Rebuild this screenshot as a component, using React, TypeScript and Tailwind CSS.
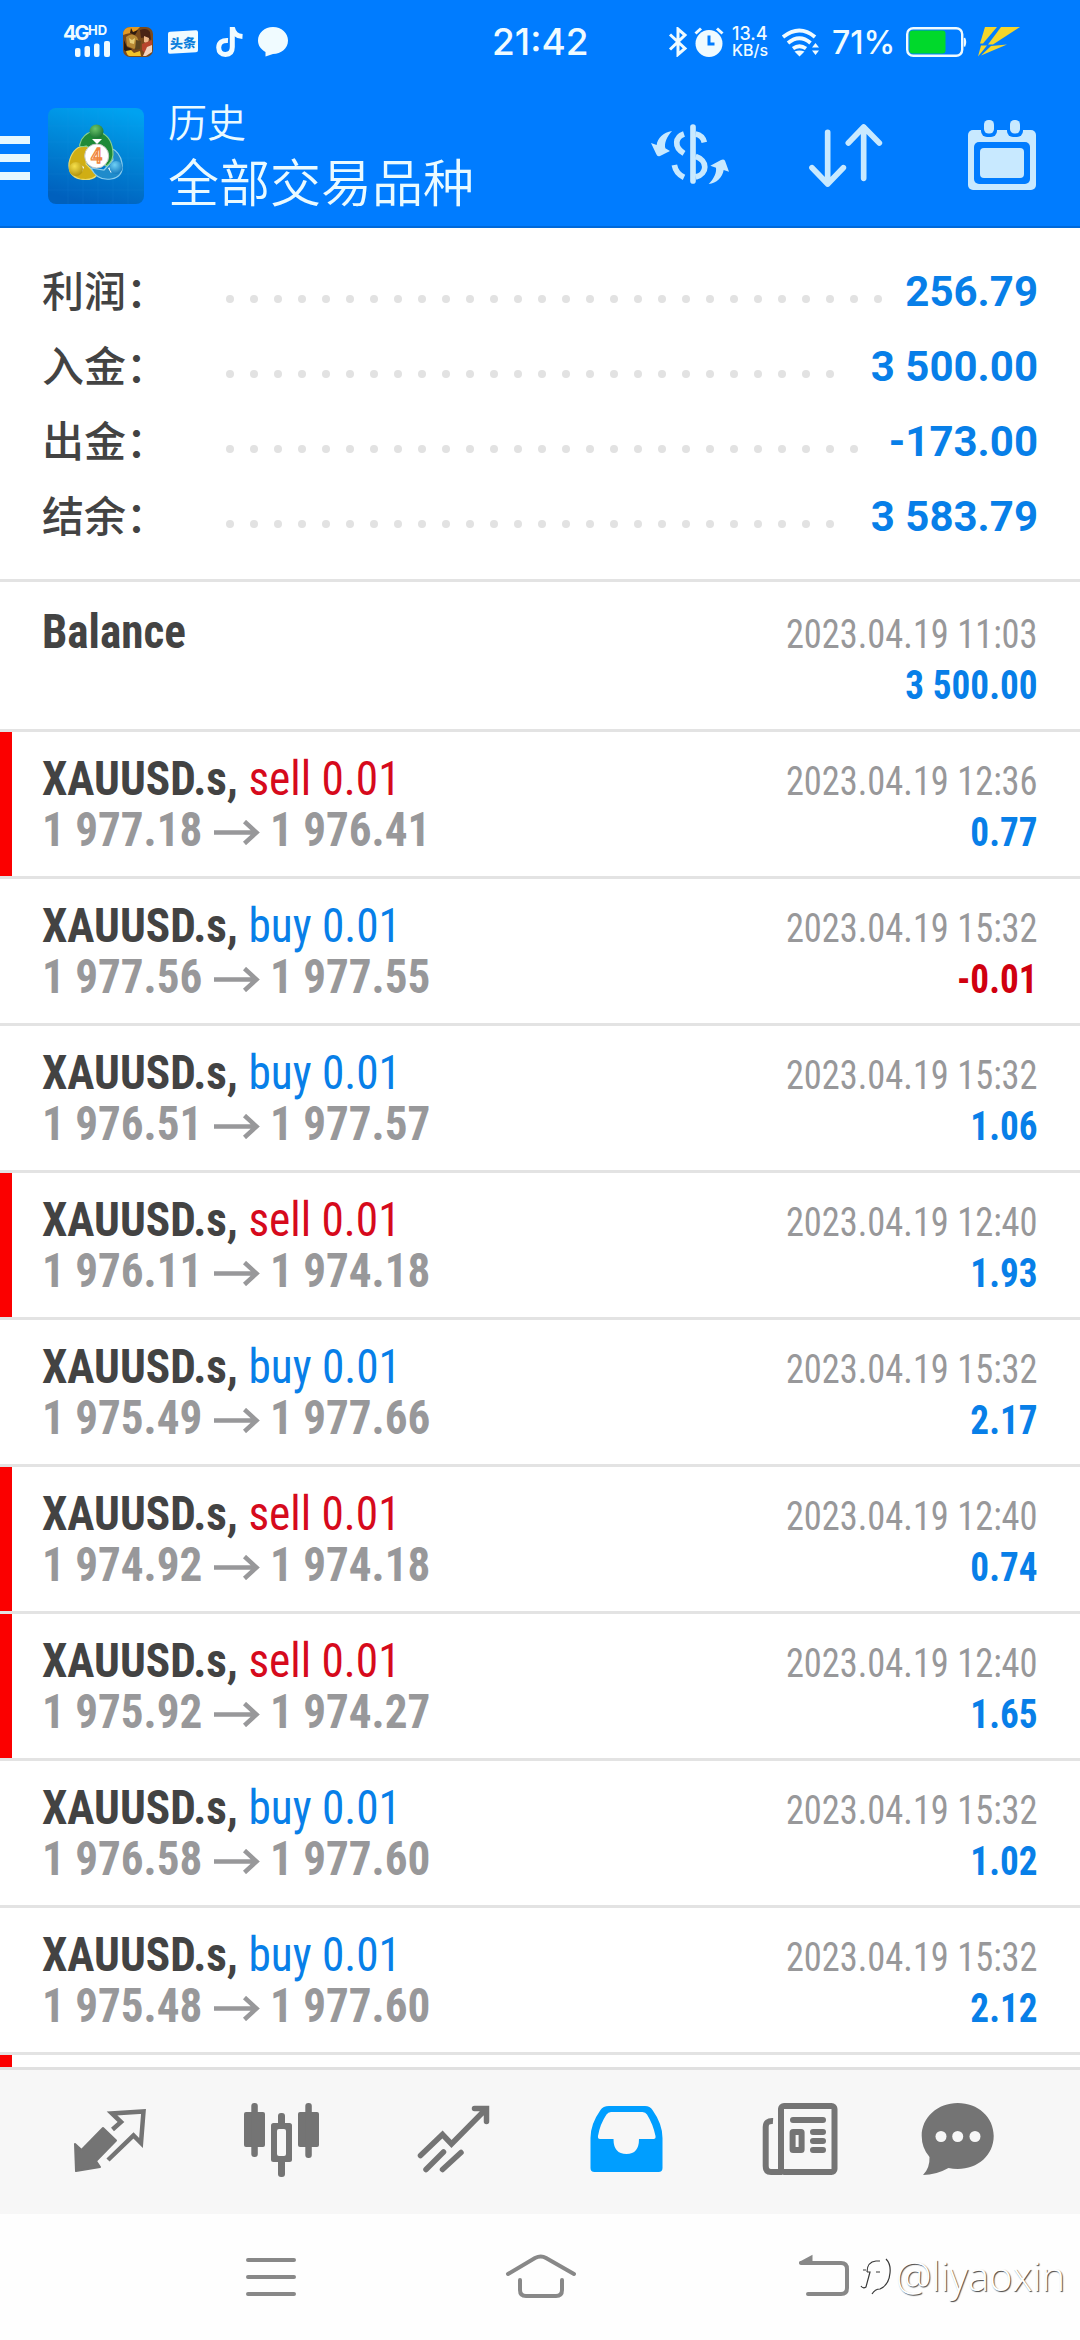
const summary = [
  { label: '利润：', value: '256.79', dots: 28 },
  { label: '入金：', value: '3 500.00', dots: 26 },
  { label: '出金：', value: '-173.00', dots: 27 },
  { label: '结余：', value: '3 583.79', dots: 26 },
];

const deals = [
  { id: 1, side: 'sell', open: '1 977.18', close: '1 976.41', time: '2023.04.19 12:36', profit: '0.77' },
  { id: 2, side: 'buy', open: '1 977.56', close: '1 977.55', time: '2023.04.19 15:32', profit: '-0.01' },
  { id: 3, side: 'buy', open: '1 976.51', close: '1 977.57', time: '2023.04.19 15:32', profit: '1.06' },
  { id: 4, side: 'sell', open: '1 976.11', close: '1 974.18', time: '2023.04.19 12:40', profit: '1.93' },
  { id: 5, side: 'buy', open: '1 975.49', close: '1 977.66', time: '2023.04.19 15:32', profit: '2.17' },
  { id: 6, side: 'sell', open: '1 974.92', close: '1 974.18', time: '2023.04.19 12:40', profit: '0.74' },
  { id: 7, side: 'sell', open: '1 975.92', close: '1 974.27', time: '2023.04.19 12:40', profit: '1.65' },
  { id: 8, side: 'buy', open: '1 976.58', close: '1 977.60', time: '2023.04.19 15:32', profit: '1.02' },
  { id: 9, side: 'buy', open: '1 975.48', close: '1 977.60', time: '2023.04.19 15:32', profit: '2.12' },
];

function StatusBar() {
  return (
    <div className="flex h-[84px] items-start pt-[25px] pl-[63px] font-['Inter',sans-serif] text-[#f0fbff]">
      {/* Signal */}
      <div className="h-8 w-[47px]">
        <div className="flex h-4 items-start font-bold">
          <span className="w-[25px] text-[20px] leading-4 tracking-[-2px]">4G</span>
          <span className="text-[13px] leading-[11px]">HD</span>
        </div>
        <svg className="ml-3 block" width="35" height="16" viewBox="0 0 35 16" fill="currentColor">
          <rect x="0" y="7" width="5.5" height="9" rx="2" />
          <rect x="9.5" y="5" width="5.5" height="11" rx="2" />
          <rect x="19" y="2.500" width="5.500" height="13.500" rx="2" />
          <rect x="29" y="0" width="6" height="16" rx="2" />
        </svg>
      </div>

      {/* Notifications */}
      <svg className="mt-0.5 ml-[13px]" width="30" height="30" viewBox="0 0 30 30">
        <rect width="30" height="30" rx="7" fill="#7a4a1c" />
        <path d="M0 8Q0 0 8 0H17L12 5L3 7Z" fill="#e39a24" />
        <path d="M8 1L10 5L15 3L12 8L7 6Z" fill="#2e1a10" />
        <path d="M17 3Q24 0 27 5L28 13L23 10L18 11Z" fill="#4b2415" />
        <path d="M21 9L26 11L25 17L21 15Z" fill="#f0b98c" />
        <path d="M19 17L29 13V24L24 28L19 23Z" fill="#b8452c" />
        <path d="M24 20L29 18V25L23 29H20Z" fill="#f3d3bd" />
        <path d="M3 10Q9 5 14 10L17 17L11 22L4 19Z" fill="#b98a35" />
        <path d="M6 11L9 13L12 11L11 17L7 16Z" fill="#e9cf7a" />
        <path d="M1 13L4 20L9 22L6 26L1 23Z" fill="#2b1d12" />
        <path d="M3 24L8 23L11 26L17 24L18 29H7Q4 29 3 24Z" fill="#f2c329" />
        <path d="M13 13L18 14L17 22L12 23Z" fill="#5c4521" />
      </svg>
      <div className="mt-[6px] ml-[15px] flex h-[22px] w-[30px] -skew-y-3 items-center justify-center rounded-[2px] bg-[#f0fbff] font-['Noto_Sans_CJK_SC',sans-serif] text-[13px] leading-none font-black text-[#0a7fdc]">
        头条
      </div>
      <svg className="mt-0.5 ml-[18px]" width="27" height="30" viewBox="0 0 27 30" fill="none" stroke="currentColor" strokeWidth="5">
        <path d="M12 13.500Q3 13 2.700 20.500Q3 27.400 9.500 27.400Q16.300 27.400 16.300 20V0" />
        <path d="M16.500 1Q18 9 26.500 9.500" />
      </svg>
      <svg className="mt-0.5 ml-[15px]" width="30" height="30" viewBox="0 0 30 30" fill="currentColor">
        <path d="M15 0C23.500 0 30 6 30 13.500C30 21.500 23 27 15 27L7.500 29.500V25C3 22.500 0 18.500 0 13.500C0 6 6.500 0 15 0Z" />
      </svg>

      <div className="mt-[-1px] ml-[204px] w-[96px] text-[37px] leading-[36px] font-medium">21:42</div>

      <svg className="mt-[2px] ml-[80px]" width="20" height="30" viewBox="0 0 20 30" fill="none" stroke="currentColor" strokeWidth="3">
        <path d="M2 7.500L17 21.500L10 27.500V2L17 8L2 22.500" />
      </svg>
      <svg className="mt-[2px] ml-[6px]" width="30" height="30" viewBox="0 0 30 30">
        <circle cx="15" cy="16.500" r="13.500" fill="currentColor" />
        <path d="M1.500 6.500L7 1.500M23 1.500L28.500 6.500" stroke="currentColor" strokeWidth="3" />
        <path d="M15 8.500V17H20.500" stroke="#007cff" strokeWidth="3" fill="none" />
      </svg>
      <div className="mt-[1px] ml-[8px] w-[40px] leading-[16px] font-medium">
        <div className="text-[18px]">13.4</div>
        <div className="text-[16px]">KB/s</div>
      </div>
      <svg className="mt-[2px] ml-[9px]" width="40" height="30" viewBox="0 0 40 30">
        <path d="M2 10Q18.500 -3 34 10M7 16Q18.500 6.500 29.500 16M12 21.500Q18.500 17 25 21.500" fill="none" stroke="currentColor" strokeWidth="3.800" />
        <path d="M13.500 24.500Q18.500 22.500 23.500 24.500L18.500 29.500Z" fill="currentColor" />
        <path d="M31 20.500L34.500 16L38 20.500ZM31 23.500L34.500 28L38 23.500Z" fill="currentColor" />
      </svg>
      <div className="mt-[2px] ml-[11px] w-[63px] text-[32px] leading-[32px] font-medium">71%</div>
      <svg className="mt-[2px] ml-[11px]" width="61" height="30" viewBox="0 0 61 30">
        <rect x="1.200" y="1.200" width="55" height="27.600" rx="6" fill="none" stroke="currentColor" strokeWidth="2.400" />
        <rect x="3.500" y="3.500" width="36" height="23" rx="3" fill="#00d92b" />
        <path d="M58.500 11Q60.500 15 58.500 19.500Z" stroke="currentColor" strokeWidth="1.500" />
      </svg>
      <svg className="mt-[2px] ml-[11px]" width="42" height="30" viewBox="0 0 42 30" fill="#f5d52a">
        <path d="M7 0H19L5 16.500H2Z" />
        <path d="M23 0H42L15 17.500H10Z" />
        <path d="M3 18.500H9L0 29.500ZM13 19L29 17.500L3 28.500Z" />
      </svg>
    </div>
  );
}

function AppLogo() {
  return (
    <svg className="ml-[18px]" width="96" height="96" viewBox="0 0 96 96">
      <defs>
        <linearGradient id="tile" x1="0.700" y1="0" x2="0.450" y2="1">
          <stop offset="0" stopColor="#00a2f0" />
          <stop offset="0.500" stopColor="#0082d4" />
          <stop offset="1" stopColor="#0060bd" />
        </linearGradient>
        <radialGradient id="green" cx="0.400" cy="0.300" r="0.800">
          <stop offset="0" stopColor="#6cc56b" />
          <stop offset="1" stopColor="#0f6a2c" />
        </radialGradient>
        <radialGradient id="yellow" cx="0.400" cy="0.300" r="0.800">
          <stop offset="0" stopColor="#f7e04a" />
          <stop offset="1" stopColor="#a88a08" />
        </radialGradient>
        <radialGradient id="blue" cx="0.400" cy="0.300" r="0.800">
          <stop offset="0" stopColor="#6fd0f5" />
          <stop offset="1" stopColor="#0a70b8" />
        </radialGradient>
      </defs>
      <rect width="96" height="96" rx="8" fill="url(#tile)" />
      <path d="M20 0V96M35 0V96M50 0V96M65 0V96M80 0V96M0 18H96M0 34H96M0 50H96M0 66H96M0 82H96" stroke="#2aa5ee" strokeOpacity="0.100" />
      <path d="M35 38Q24 40 21 55Q20 68 32 71Q44 73 49 67L38 56L41 39Z" fill="#d0ae14" stroke="#e9da70" strokeWidth="1.200" />
      <path d="M63 40Q72 44 74 55Q76 69 63 71Q49 73 43 60L56 62L65 52Z" fill="#1f8bcb" stroke="#8ccdec" strokeWidth="1.200" />
      <path d="M52 24Q65 29 65 47Q64 55 58 58L49 44L38 38Q30 40 32 36Q34 26 46 23Z" fill="#1f8a38" stroke="#86cf8d" strokeWidth="1.200" />
      <path d="M44 31L49 36L54 31ZM30 55L36 59L34 64ZM60 60L68 57L63 65Z" fill="#fff" />
      <circle cx="48.500" cy="23.500" r="7" fill="url(#green)" />
      <circle cx="28" cy="61" r="7" fill="url(#yellow)" />
      <circle cx="68" cy="59.500" r="6.500" fill="url(#blue)" />
      <circle cx="48.700" cy="48" r="12" fill="#fff" stroke="#c5c9c4" />
      <text x="48.500" y="55" textAnchor="middle" fontFamily="Roboto, sans-serif" fontSize="20" fontWeight="500" fill="#fff3e0" stroke="#f0853c" strokeWidth="1.300">
        4
      </text>
    </svg>
  );
}

function Toolbar() {
  return (
    <div className="flex h-[144px] items-start border-b-2 border-[#0069d9] pt-[24px]">
      <div className="mt-[28px] flex w-[30px] flex-col gap-[10px]">
        <div className="h-2 bg-[#e6f8ff]" />
        <div className="h-2 bg-[#e6f8ff]" />
        <div className="h-2 bg-[#e6f8ff]" />
      </div>
      <AppLogo />
      <div className="mt-[-13px] ml-[24px] w-[482px] font-['Noto_Sans_CJK_SC',sans-serif] font-[350] text-[#eafaff]">
        <div className="text-[39px] leading-[50px]">历史</div>
        <div className="mt-[2px] text-[51px] leading-[66px]">全部交易品种</div>
      </div>

      <svg className="mt-[16px]" width="80" height="61" viewBox="0 327 240 183" fill="none" stroke="#c8e9ff" strokeWidth="17">
        <path d="M129 336V498" strokeLinecap="round" />
        <path d="M102 357C76 366 70 396 102 415M137 357Q158 361 163 382M137 424C173 436 174 476 137 486M73 450Q78 476 102 487" />
        <path d="M66 348C40 352 22 370 20 390L3 384L19 418Q22 426 30 423L60 408L46 400C42 385 50 365 66 348Z" fill="#c8e9ff" stroke="none" />
        <path d="M176 507C192 490 200 474 198 458L181 452L213 435Q221 431 225 437L237 470L221 465C217 488 200 505 176 507Z" fill="#c8e9ff" stroke="none" />
      </svg>
      <svg className="mt-[16px] ml-[79px]" width="74" height="64" viewBox="478 327 222 192" fill="none" stroke="#c8e9ff" strokeWidth="17" strokeLinecap="round" strokeLinejoin="round">
        <path d="M534 352V507M487 458L534 507L581 458M642 490V336M596 384L642 336L689 384" />
      </svg>
      <svg className="mt-[12px] ml-[85px]" width="68" height="70" viewBox="0 0 68 70" fill="#c8e9ff">
        <rect y="10" width="68" height="60" rx="5" />
        <rect x="13" y="0" width="16" height="17" rx="6" fill="#007cff" />
        <rect x="39" y="0" width="16" height="17" rx="6" fill="#007cff" />
        <rect x="16" y="0" width="10" height="13.500" rx="4.500" />
        <rect x="42" y="0" width="10" height="13.500" rx="4.500" />
        <rect x="6" y="22" width="56" height="42" rx="5" fill="#007cff" />
        <rect x="12" y="28" width="44" height="30" rx="4" />
      </svg>
    </div>
  );
}

function Deal({ deal }: { deal: (typeof deals)[number] }) {
  const sell = deal.side === 'sell';

  return (
    <div className={`flex h-[147px] shrink-0 justify-between border-b-3 border-[#e3e3e3] pr-[42px] ${sell ? '' : 'pl-3'}`}>
      {sell && <div className="w-3 bg-[#fb0000]" />}
      <div className="ml-[30px] flex-1 pt-[21px] text-[48px] leading-[51px] font-bold whitespace-nowrap">
        <div className="origin-left scale-x-[0.944] text-[#434343]">
          XAUUSD.s,{' '}
          <span className={sell ? 'font-normal text-[#d60a1c]' : 'font-normal text-[#087fe8]'}>{deal.side} 0.01</span>
        </div>
        <div className="flex text-[#98989a]">
          <span className="w-[172px] origin-left scale-x-[0.94]">{deal.open}</span>
          <svg className="mt-[16px] mr-[10px]" width="46" height="25" viewBox="0 0 46 25" fill="none" stroke="currentColor" strokeWidth="4.500">
            <path d="M0 12.500H43M30.500 1.500L42.500 12.500L30.500 23.500" />
          </svg>
          <span className="origin-left scale-x-[0.94]">{deal.close}</span>
        </div>
      </div>
      <div className="origin-right pt-6 text-right text-[40px] leading-[51px]">
        <div className="origin-right scale-x-[0.91] text-[#98989a]">{deal.time}</div>
        <div className={`origin-right scale-x-[0.93] font-bold ${deal.profit.startsWith('-') ? 'text-[#d0000f]' : 'text-[#087fe8]'}`}>
          {deal.profit}
        </div>
      </div>
    </div>
  );
}

function TabBar() {
  return (
    <div className="flex h-[147px] shrink-0 items-start border-t-3 border-[#e0e0e0] bg-[#f7f7f7] pt-[30px] pl-[70px] text-[#747474]">
      <svg width="80" height="80" viewBox="70 2100 80 80">
        <path d="M75 2144L81.500 2150L103 2128L116 2140.500L96 2161L100 2167L76 2171Z" fill="currentColor" stroke="currentColor" strokeWidth="2" strokeLinejoin="round" />
        <path d="M112.500 2129.500L121 2122L112 2113.500L143.500 2111.500L141 2143L133.500 2135.500L108 2160" fill="none" stroke="currentColor" strokeWidth="4.500" />
      </svg>
      <svg className="ml-[90px]" width="84" height="80" viewBox="240 2100 84 80" fill="currentColor">
        <rect x="244" y="2112" width="21" height="35" rx="2" />
        <rect x="251.300" y="2103" width="6.500" height="54" rx="3" />
        <rect x="298" y="2112" width="21" height="35" rx="2" />
        <rect x="305.300" y="2103" width="6.500" height="55" rx="3" />
        <rect x="278" y="2113" width="7" height="64" rx="3" />
        <rect x="271" y="2123" width="21" height="39" rx="2.500" />
        <rect x="277" y="2129" width="9" height="27" rx="2" fill="#f7f7f7" />
      </svg>
      <svg className="ml-[91px]" width="80" height="80" viewBox="415 2100 80 80" fill="none" stroke="currentColor" strokeWidth="5.500" strokeLinecap="round">
        <path d="M420.500 2155.500L442.500 2134.500L451.500 2144L486 2109M474.500 2108.500H486.500V2121.500M426 2169.500L443.500 2152M442.500 2169.500L461 2152.500" />
      </svg>
      <svg className="ml-[90px]" width="84" height="80" viewBox="585 2100 84 80">
        <path
          d="M609 2106H645Q650 2106 652.500 2110Q662.500 2124 662.500 2138V2168Q662.500 2172 658.500 2172H594.500Q590.500 2172 590.500 2168V2138Q590.500 2124 600.500 2110Q603 2106 609 2106ZM611 2112Q608 2112 606.500 2114.500Q600 2124 598 2136Q597.500 2139 600 2139H613.500Q613.500 2154 626.500 2154Q639 2154 639 2139H653.500Q656 2139 655.500 2136Q653 2124 647 2114.500Q645.500 2112 642.500 2112Z"
          fill="#009eff"
        />
      </svg>
      <svg className="ml-[89px]" width="84" height="80" viewBox="758 2100 84 80" fill="none" stroke="currentColor" strokeWidth="6">
        <rect x="781" y="2106" width="53.500" height="66" rx="3" />
        <path d="M773 2121Q765.700 2120.500 765.700 2127V2166Q765.700 2172 771 2172H782" />
        <path d="M793 2120H823M813 2132H823M813 2141H823M813 2150H823" strokeLinecap="round" />
        <rect x="792.600" y="2132" width="9" height="18" rx="0.500" />
      </svg>
      <svg className="ml-[74px]" width="84" height="80" viewBox="916 2100 84 80">
        <path d="M957.700 2103C978 2103 993.700 2117 993.700 2136C993.700 2155 978 2169 957.700 2169Q953 2169 948.500 2168Q936 2175 923 2175Q930 2168 929.500 2157Q921.700 2148 921.700 2136C921.700 2117 938 2103 957.700 2103Z" fill="currentColor" />
        <circle cx="941" cy="2136.500" r="5.500" fill="#f7f7f7" />
        <circle cx="957.700" cy="2136.500" r="5.500" fill="#f7f7f7" />
        <circle cx="975" cy="2136.500" r="5.500" fill="#f7f7f7" />
      </svg>
    </div>
  );
}

function SystemNav() {
  return (
    <div className="flex h-[126px] shrink-0 items-start bg-[#fefefe] pt-[36px] pl-[246px] text-[#888]">
      <svg width="50" height="50" viewBox="246 2250 50 50" stroke="currentColor" strokeWidth="4" strokeLinecap="round">
        <path d="M248 2260H294M248 2277H294M248 2294H294" />
      </svg>
      <svg className="ml-[209px]" width="72" height="50" viewBox="505 2250 72 50" fill="none" stroke="currentColor" strokeWidth="4" strokeLinecap="round">
        <path d="M508 2274L535 2258Q541 2255 546 2258L574 2274M520 2280V2290Q520 2296 526 2296H556Q562 2296 562 2290V2280" />
      </svg>
      <svg className="ml-[219px]" width="54" height="50" viewBox="796 2250 54 50" fill="none" stroke="currentColor" strokeWidth="4" strokeLinecap="round">
        <path d="M801 2263H841Q847 2263 847 2269V2288Q847 2294 841 2294H808" />
        <path d="M799.500 2263L811.500 2256.500V2263Z" fill="currentColor" strokeWidth="2" />
      </svg>
      <div className="mt-[2px] ml-[8px] flex text-white">
        <svg className="shrink-0" width="38" height="44" viewBox="0 0 38 44" fill="none" stroke="#3a3a3a" strokeWidth="1.200">
          <path d="M8 18H5M9 20Q9 10 18 9H22M28 7Q33 12 32 21Q31 33 22 37Q17 37 14 42M18 20H22M9 20H12L8 35Q5 37 3 34" />
        </svg>
        <span className="font-['Open_Sans','Noto_Sans',sans-serif] text-[40px] leading-[48px] font-light font-stretch-normal [text-shadow:1px_1px_1px_#444]">
          @liyaoxin
        </span>
      </div>
    </div>
  );
}

export default function App() {
  return (
    <div className="flex h-[2340px] w-[1080px] flex-col overflow-hidden bg-white font-['Roboto_Condensed','Roboto',sans-serif] font-stretch-condensed">
      <header className="h-[228px] shrink-0 bg-[#007cff] font-stretch-normal">
        <StatusBar />
        <Toolbar />
      </header>

      {/* Account summary */}
      <div className="h-[354px] shrink-0 border-b-3 border-[#e3e3e3] pt-[26px] pr-[42px] pl-[42px] font-['Roboto',sans-serif] font-stretch-normal">
        {summary.map((row) => (
          <div key={row.label} className="flex h-[75px] items-start">
            <div className="w-[184px] font-['Noto_Sans_CJK_SC',sans-serif] text-[42px] leading-[69px] font-medium text-[#434343]">{row.label}</div>
            <div className="mt-[41px] flex flex-1 gap-4">
              {Array.from({ length: row.dots }, (_, i) => (
                <span key={i} className="size-2 rounded-full bg-[#e2e2e2]" />
              ))}
            </div>
            <div className="text-[42px] leading-[75px] font-bold text-[#087fe8]">{row.value}</div>
          </div>
        ))}
      </div>

      {/* Deals */}
      <div className="h-[1485px] shrink-0 overflow-hidden">
        <div className="flex h-[150px] justify-between border-b-3 border-[#e3e3e3] pr-[42px] pl-[42px] leading-[51px]">
          <div className="origin-left scale-x-[0.94] pt-[24px] text-[48px] font-bold text-[#434343]">Balance</div>
          <div className="pt-[27px] text-right text-[40px]">
            <div className="origin-right scale-x-[0.91] text-[#98989a]">2023.04.19 11:03</div>
            <div className="origin-right scale-x-[0.93] font-bold text-[#087fe8]">3 500.00</div>
          </div>
        </div>
        {deals.map((deal) => (
          <Deal key={deal.id} deal={deal} />
        ))}
        <div className="h-[12px] w-3 bg-[#fb0000]" />
      </div>

      <TabBar />
      <SystemNav />
    </div>
  );
}
